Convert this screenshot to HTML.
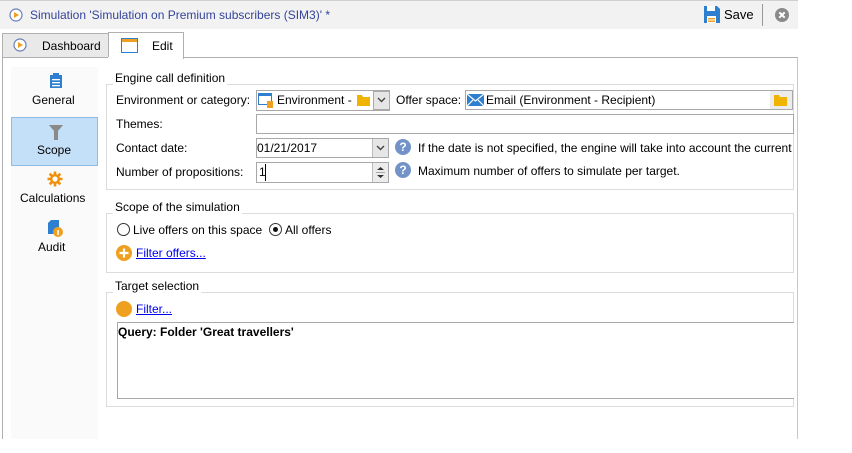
<!DOCTYPE html>
<html><head><meta charset="utf-8"><style>
*{margin:0;padding:0;box-sizing:border-box}
body{width:852px;height:453px;background:#fff;font-family:"Liberation Sans",sans-serif;font-size:12px;color:#000;position:relative;overflow:hidden}
.a{position:absolute}
.t{position:absolute;white-space:nowrap;line-height:14px}
.box{position:absolute;border:1px solid #a8a8a8;background:#fff}
.grp{position:absolute;border:1px solid #dcdcdc}
.leg{position:absolute;background:#fff;padding:0 2px;line-height:14px;white-space:nowrap}
.lnk{color:#0000ee;text-decoration:underline}
.help{position:absolute;width:16px;height:16px;border-radius:50%;background:#7292c8;color:#fff;font-weight:bold;font-size:12px;text-align:center;line-height:16px}
.dd{position:absolute;width:16px;height:19px;background:#e6e6e6;border-left:1px solid #bbb}
</style></head><body>
<div class="a" style="left:0;top:0;width:798px;height:29px;background:#f2f2f2;border-top:1px solid #d0d0d0"></div>
<svg class="a" style="left:9px;top:8px" width="14" height="14"><circle cx="7" cy="7" r="6" fill="#fff" stroke="#6a7fb8" stroke-width="1.2"/><path d="M5 4 L10 7 L5 10Z" fill="#f0a020"/></svg>
<div class="t" style="left:30px;top:8px;color:#34449a;font-size:12px">Simulation 'Simulation on Premium subscribers (SIM3)' *</div>
<svg class="a" style="left:704px;top:6px" width="16" height="17"><path d="M0 0H13L16 3V17H0Z" fill="#2f7fd0"/><rect x="3" y="0" width="8" height="5" fill="#fff"/><rect x="3" y="10" width="9" height="7" fill="#fff"/><rect x="4" y="12" width="7" height="1.5" fill="#f0a020"/><rect x="4" y="14.5" width="7" height="1.5" fill="#f0a020"/></svg>
<div class="t" style="left:724px;top:8px;font-size:13px">Save</div>
<div class="a" style="left:762px;top:4px;width:1px;height:22px;background:#999"></div>
<svg class="a" style="left:775px;top:8px" width="14" height="14"><circle cx="7" cy="7" r="7" fill="#8a8a8a"/><path d="M4.3 4.3L9.7 9.7M9.7 4.3L4.3 9.7" stroke="#fff" stroke-width="2"/></svg>
<div class="a" style="left:2px;top:33px;width:107px;height:25px;background:#e9e9e9;border:1px solid #b0b0b0"></div>
<svg class="a" style="left:13px;top:38px" width="14" height="14"><circle cx="7" cy="7" r="6" fill="#fff" stroke="#6a7fb8" stroke-width="1.2"/><path d="M5 4 L10 7 L5 10Z" fill="#f0a020"/></svg>
<div class="t" style="left:42px;top:39px">Dashboard</div>
<div class="a" style="left:108px;top:32px;width:76px;height:27px;background:#fff;border:1px solid #b0b0b0;border-bottom:none"></div>
<svg class="a" style="left:121px;top:38px" width="17" height="15"><rect x="0.5" y="0.5" width="16" height="14" fill="#fff" stroke="#2f7fd0"/><rect x="1" y="1" width="15" height="3" fill="#f0a020"/></svg>
<div class="t" style="left:152px;top:39px">Edit</div>
<div class="a" style="left:2px;top:57px;width:796px;height:382px;border-left:1px solid #b0b0b0;border-right:1px solid #c8c8c8;border-top:1px solid #b0b0b0"></div>
<div class="a" style="left:108px;top:57px;width:75px;height:2px;background:#fff"></div>
<div class="a" style="left:11px;top:67px;width:87px;height:372px;background:#fafafa"></div>
<svg class="a" style="left:50px;top:73px" width="12" height="15"><rect x="0" y="2" width="12" height="13" fill="#2f7fd0"/><rect x="3" y="0" width="6" height="3" fill="#2f7fd0"/><rect x="2" y="6" width="8" height="1.3" fill="#fff"/><rect x="2" y="9" width="8" height="1.3" fill="#fff"/><rect x="2" y="12" width="8" height="1.3" fill="#fff"/></svg>
<div class="t" style="left:32px;top:93px">General</div>
<div class="a" style="left:11px;top:117px;width:87px;height:49px;background:#c4e0f9;border:1px solid #8ebce8"></div>
<svg class="a" style="left:49px;top:125px" width="14" height="15"><path d="M0 0H14L9 6V15H5V6Z" fill="#8a8a8a"/></svg>
<div class="t" style="left:37px;top:143px">Scope</div>
<svg class="a" style="left:47px;top:171px" width="16" height="16"><g stroke="#f0900a" stroke-width="2.6"><path d="M8 0.5V15.5M0.5 8H15.5M2.7 2.7L13.3 13.3M13.3 2.7L2.7 13.3"/></g><circle cx="8" cy="8" r="5" fill="#f0900a"/><circle cx="8" cy="8" r="2.6" fill="#fff"/></svg>
<div class="t" style="left:20px;top:191px">Calculations</div>
<svg class="a" style="left:48px;top:220px" width="15" height="17"><path d="M3 0H11V14H0V3Z" fill="#2f7fd0"/><circle cx="10" cy="12" r="5" fill="#f0a020"/><rect x="9.3" y="10" width="1.5" height="5" fill="#fff"/></svg>
<div class="t" style="left:38px;top:240px">Audit</div>
<div class="grp" style="left:106px;top:84px;width:688px;height:106px"></div>
<div class="leg" style="left:113px;top:71px">Engine call definition</div>
<div class="t" style="left:116px;top:93px">Environment or category:</div>
<div class="box" style="left:256px;top:90px;width:134px;height:21px"></div>
<svg class="a" style="left:258px;top:93px" width="16" height="15"><rect x="0.5" y="0.5" width="13" height="11" fill="#fff" stroke="#2f7fd0"/><rect x="1" y="1" width="12" height="2" fill="#2f7fd0"/><rect x="9" y="8" width="6" height="7" fill="#f0a020"/></svg>
<div class="t" style="left:277px;top:93px">Environment -</div>
<svg class="a" style="left:357px;top:95px" width="13" height="11"><path d="M0 0H5L6 2H13V11H0Z" fill="#f0b400"/></svg>
<div class="dd" style="left:373px;top:91px;border:1px solid #aaa;width:17px"></div>
<svg class="a" style="left:377px;top:97px" width="9" height="6"><path d="M1 1L4.5 4.5L8 1" stroke="#444" stroke-width="1.4" fill="none"/></svg>
<div class="t" style="left:396px;top:93px">Offer space:</div>
<div class="box" style="left:465px;top:90px;width:328px;height:20px"></div>
<svg class="a" style="left:467px;top:94px" width="17" height="12"><rect width="17" height="12" fill="#2f7fd0"/><path d="M0 0L8.5 7L17 0M0 12L6 6M17 12L11 6" stroke="#fff" stroke-width="1.2" fill="none"/></svg>
<div class="t" style="left:486px;top:93px">Email (Environment - Recipient)</div>
<div class="a" style="left:770px;top:91px;width:22px;height:18px;background:#ececec"></div>
<svg class="a" style="left:774px;top:95px" width="13" height="11"><path d="M0 0H5L6 2H13V11H0Z" fill="#f0b400"/></svg>
<div class="t" style="left:116px;top:117px">Themes:</div>
<div class="box" style="left:256px;top:114px;width:538px;height:20px"></div>
<div class="t" style="left:116px;top:141px">Contact date:</div>
<div class="box" style="left:256px;top:138px;width:133px;height:20px"></div>
<div class="t" style="left:257px;top:141px">01/21/2017</div>
<div class="dd" style="left:372px;top:139px;height:18px"></div>
<svg class="a" style="left:376px;top:145px" width="9" height="6"><path d="M1 1L4.5 4.5L8 1" stroke="#444" stroke-width="1.4" fill="none"/></svg>
<div class="help" style="left:395px;top:139px">?</div>
<div class="t" style="left:418px;top:141px">If the date is not specified, the engine will take into account the current</div>
<div class="t" style="left:116px;top:165px">Number of propositions:</div>
<div class="box" style="left:256px;top:162px;width:133px;height:21px"></div>
<div class="t" style="left:259px;top:165px">1</div>
<div class="a" style="left:265px;top:164px;width:1px;height:17px;background:#000"></div>
<div class="dd" style="left:372px;top:163px;height:19px;background:#ececec"></div>
<svg class="a" style="left:376px;top:165px" width="9" height="15"><path d="M1 5L4.5 2L8 5Z M1 10L4.5 13L8 10Z" fill="#333"/><path d="M0 7.5H9" stroke="#aaa"/></svg>
<div class="help" style="left:395px;top:162px">?</div>
<div class="t" style="left:418px;top:164px">Maximum number of offers to simulate per target.</div>
<div class="grp" style="left:106px;top:213px;width:688px;height:60px"></div>
<div class="leg" style="left:113px;top:200px">Scope of the simulation</div>
<div class="a" style="left:117px;top:223px;width:13px;height:13px;border-radius:50%;border:1px solid #333;background:#fff"></div>
<div class="t" style="left:133px;top:223px">Live offers on this space</div>
<div class="a" style="left:269px;top:223px;width:13px;height:13px;border-radius:50%;border:1px solid #333;background:#fff"></div>
<div class="a" style="left:273px;top:227px;width:5px;height:5px;border-radius:50%;background:#111"></div>
<div class="t" style="left:285px;top:223px">All offers</div>
<svg class="a" style="left:116px;top:245px" width="16" height="16"><circle cx="8" cy="8" r="8" fill="#f0a020"/><path d="M8 3.5V12.5M3.5 8H12.5" stroke="#fff" stroke-width="2.2"/></svg>
<div class="t lnk" style="left:136px;top:246px">Filter offers...</div>
<div class="grp" style="left:106px;top:292px;width:688px;height:115px"></div>
<div class="leg" style="left:113px;top:279px">Target selection</div>
<svg class="a" style="left:116px;top:301px" width="16" height="16"><circle cx="8" cy="8" r="8" fill="#f0a020"/></svg>
<div class="t lnk" style="left:136px;top:302px">Filter...</div>
<div class="box" style="left:117px;top:322px;width:677px;height:77px;border-right:none;border-color:#a8a8a8"></div>
<div class="t" style="left:118px;top:325px;font-weight:bold">Query: Folder 'Great travellers'</div>
</body></html>
